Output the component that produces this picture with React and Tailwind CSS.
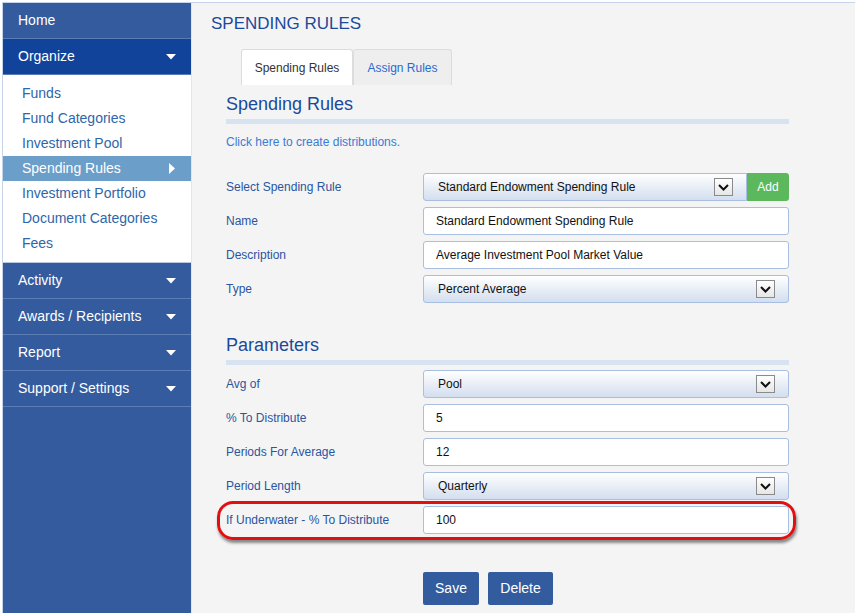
import { useState } from "react";

const font = { fontFamily: '"Liberation Sans", Arial, sans-serif' };

const subItems = [
  "Funds",
  "Fund Categories",
  "Investment Pool",
  "Spending Rules",
  "Investment Portfolio",
  "Document Categories",
  "Fees",
];

const DownCaret = () => (
  <svg width="10" height="6" viewBox="0 0 10 6" className="shrink-0">
    <path d="M0 0 L10 0 L5 5.5 Z" fill="#ffffff" />
  </svg>
);

const RightCaret = () => (
  <svg width="6" height="11" viewBox="0 0 6 11" className="shrink-0">
    <path d="M0 0 L6 5.5 L0 11 Z" fill="#ffffff" />
  </svg>
);

const NavRow = ({ label, dark, caret }) => (
  <div
    className={`flex h-[36px] items-center justify-between border-b border-[#5a7db6] pl-[15px] pr-[15px] text-[14px] text-white ${
      dark ? "bg-[#11439a]" : "bg-[#345b9e]"
    }`}
  >
    <span>{label}</span>
    {caret && <DownCaret />}
  </div>
);

const ChevronBox = () => (
  <div className="flex h-[18px] w-[19px] items-center justify-center border border-[#8a8a8a] bg-gradient-to-b from-white to-[#e6e6e6]">
    <svg width="11" height="7" viewBox="0 0 11 7">
      <path d="M1 1 L5.5 5.5 L10 1" fill="none" stroke="#111" strokeWidth="2" />
    </svg>
  </div>
);

const SelectBox = ({ value, className = "" }) => (
  <div
    className={`flex h-[28px] items-center justify-between rounded-[3px] border border-[#a9bfe1] bg-gradient-to-b from-white to-[#d3deee] pl-[14px] pr-[13px] text-[12px] text-[#111] ${className}`}
  >
    <span>{value}</span>
    <ChevronBox />
  </div>
);

const TextBox = ({ value }) => (
  <div className="flex h-[28px] w-full items-center rounded-[3px] border border-[#a9bfe1] bg-white pl-[12px] text-[12px] text-[#111]">
    {value}
  </div>
);

const Row = ({ label, children }) => (
  <div className="flex h-[28px] items-center">
    <div className="w-[197px] text-[12px] text-[#2a55a0]">{label}</div>
    <div className="flex w-[366px]">{children}</div>
  </div>
);

const SectionHead = ({ title }) => (
  <div>
    <h2 className="text-[18px] leading-[22px] text-[#1a4a9a]">{title}</h2>
    <div className="mt-[4px] h-[5px] bg-[#d8e3f2]" />
  </div>
);

export default function App() {
  const [tab, setTab] = useState("rules");

  return (
    <div style={font} className="h-[613px] w-[855px] overflow-hidden bg-white pl-[2px] pt-[2px]">
      <div className="flex h-full border-l border-t border-[#c6d4ea] bg-[#f4f4f4]">
        {/* SIDEBAR */}
        <div className="flex w-[189px] shrink-0 flex-col border-r border-[#dfe6f0] bg-[#345b9e]">
          <NavRow label="Home" />
          <NavRow label="Organize" dark caret />
          <div className="border-b border-[#b7c8e3] bg-white pb-[6px] pt-[6px]">
            {subItems.map((item) => (
              <div
                key={item}
                className={`flex h-[25px] items-center justify-between pl-[19px] pr-[16px] text-[14px] ${
                  item === "Spending Rules" ? "bg-[#6b9ec9] text-white" : "text-[#2e66aa]"
                }`}
              >
                <span>{item}</span>
                {item === "Spending Rules" && <RightCaret />}
              </div>
            ))}
          </div>
          <NavRow label="Activity" caret />
          <NavRow label="Awards / Recipients" caret />
          <NavRow label="Report" caret />
          <NavRow label="Support / Settings" caret />
        </div>

        {/* MAIN */}
        <div className="flex-1 pl-[19px] pt-[11px]">
          <h1 className="text-[17px] leading-[20px] text-[#1a4a9a]">SPENDING RULES</h1>

          <div className="ml-[30px] mt-[15px] flex text-[12px]">
            <button
              onClick={() => setTab("rules")}
              className={`h-[36px] w-[112px] rounded-t-[3px] border border-b-0 border-[#dcdcdc] ${
                tab === "rules" ? "bg-white text-[#333]" : "bg-[#eeeeee] text-[#2a6ad0]"
              }`}
            >
              Spending Rules
            </button>
            <button
              onClick={() => setTab("assign")}
              className={`h-[36px] w-[99px] rounded-t-[3px] border border-b-0 border-[#dcdcdc] ${
                tab === "assign" ? "bg-white text-[#333]" : "bg-[#eeeeee] text-[#2a6ad0]"
              }`}
            >
              Assign Rules
            </button>
          </div>

          <div className="ml-[15px] w-[563px] pt-[8px]">
            <SectionHead title="Spending Rules" />
            <div className="mt-[9px] text-[12px] text-[#3a7bd5]">Click here to create distributions.</div>

            <div className="mt-[22px] flex flex-col gap-[6px]">
              <Row label="Select Spending Rule">
                <SelectBox value="Standard Endowment Spending Rule" className="w-[324px] rounded-r-none pr-[9px]" />
                <button className="h-[28px] w-[42px] rounded-r-[3px] bg-[#5cb85c] text-[12px] text-white">Add</button>
              </Row>
              <Row label="Name">
                <TextBox value="Standard Endowment Spending Rule" />
              </Row>
              <Row label="Description">
                <TextBox value="Average Investment Pool Market Value" />
              </Row>
              <Row label="Type">
                <SelectBox value="Percent Average" className="w-full" />
              </Row>
            </div>

            <div className="mt-[31px]">
              <SectionHead title="Parameters" />
            </div>

            <div className="mt-[5px] flex flex-col gap-[6px]">
              <Row label="Avg of">
                <SelectBox value="Pool" className="w-full" />
              </Row>
              <Row label="% To Distribute">
                <TextBox value="5" />
              </Row>
              <Row label="Periods For Average">
                <TextBox value="12" />
              </Row>
              <Row label="Period Length">
                <SelectBox value="Quarterly" className="w-full" />
              </Row>
              <div className="relative">
                <Row label="If Underwater - % To Distribute">
                  <TextBox value="100" />
                </Row>
                <div className="pointer-events-none absolute -bottom-[6px] -left-[9px] -right-[7px] -top-[5px] rounded-[16px] border-[3px] border-[#e01010] shadow-[1px_3px_3px_rgba(0,0,0,0.45)]" />
              </div>
            </div>

            <div className="ml-[197px] mt-[38px] flex gap-[9px]">
              <button className="h-[33px] w-[56px] rounded-[2px] bg-[#335c9f] text-[14px] text-white">Save</button>
              <button className="h-[33px] w-[65px] rounded-[2px] bg-[#335c9f] text-[14px] text-white">Delete</button>
            </div>
          </div>
        </div>
      </div>
    </div>
  );
}
